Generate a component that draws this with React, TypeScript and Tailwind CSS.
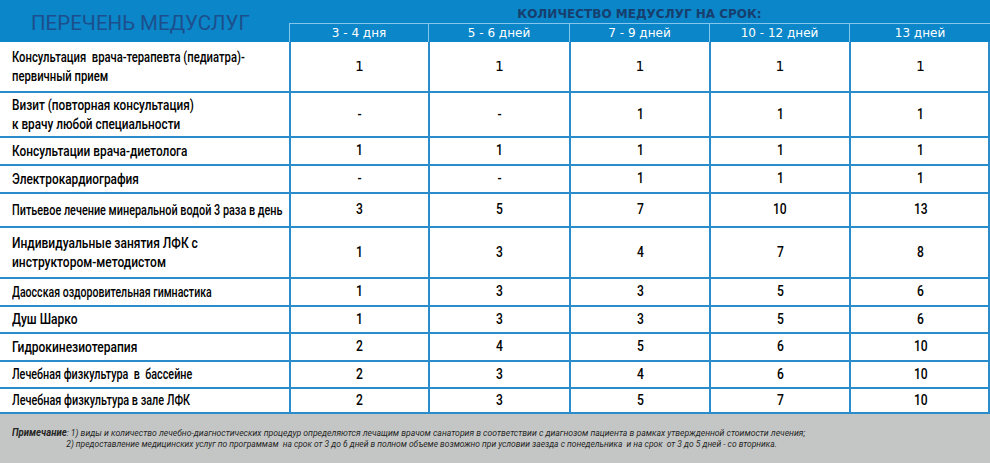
import React from "react";

type Row = {
  label: string[];
  values: string[];
  h: string;
  size: string;
  sx: string;
  wide?: boolean;
};

const rows: Row[] = [
  { label: ["Консультация  врача-терапевта (педиатра)-", "первичный прием"], values: ["1", "1", "1", "1", "1"], h: "h-[51px]", size: "text-[15px]", sx: "scale-x-[0.75]", wide: true },
  { label: ["Визит (повторная консультация)", "к врачу любой специальности"], values: ["-", "-", "1", "1", "1"], h: "h-[45px]", size: "text-[15px]", sx: "scale-x-[0.785]" },
  { label: ["Консультации врача-диетолога"], values: ["1", "1", "1", "1", "1"], h: "h-[28px]", size: "text-[15px]", sx: "scale-x-[0.79]" },
  { label: ["Электрокардиография"], values: ["-", "-", "1", "1", "1"], h: "h-[28px]", size: "text-[15px]", sx: "scale-x-[0.79]" },
  { label: ["Питьевое лечение минеральной водой 3 раза в день"], values: ["3", "5", "7", "10", "13"], h: "h-[34px]", size: "text-[14px]", sx: "scale-x-[0.775]" },
  { label: ["Индивидуальные занятия ЛФК с", "инструктором-методистом"], values: ["1", "3", "4", "7", "8"], h: "h-[51px]", size: "text-[15px]", sx: "scale-x-[0.8]" },
  { label: ["Даосская оздоровительная гимнастика"], values: ["1", "3", "3", "5", "6"], h: "h-[28px]", size: "text-[14px]", sx: "scale-x-[0.755]" },
  { label: ["Душ Шарко"], values: ["1", "3", "3", "5", "6"], h: "h-[27px]", size: "text-[15px]", sx: "scale-x-[0.8]" },
  { label: ["Гидрокинезиотерапия"], values: ["2", "4", "5", "6", "10"], h: "h-[28px]", size: "text-[15px]", sx: "scale-x-[0.8]" },
  { label: ["Лечебная физкультура  в  бассейне"], values: ["2", "3", "4", "6", "10"], h: "h-[27px]", size: "text-[14px]", sx: "scale-x-[0.77]" },
  { label: ["Лечебная физкультура в зале ЛФК"], values: ["2", "3", "5", "7", "10"], h: "h-[25px]", size: "text-[14px]", sx: "scale-x-[0.775]" },
];

const periods = ["3 - 4 дня", "5 - 6 дней", "7 - 9 дней", "10 - 12 дней", "13 дней"];

const cols = "grid grid-cols-[289px_139px_141px_140px_140px_141px]";
const cond = "font-['Roboto',sans-serif] font-medium";

export default function App() {
  return (
    <div className="w-[990px] h-[463px] bg-white flex flex-col overflow-hidden">
      {/* Header */}
      <div className="flex h-[42px] bg-[#0a86c9] shrink-0">
        <div className="w-[289px] flex items-center pl-[31px] pt-[5px]">
          <h1 className="font-['Roboto',sans-serif] text-[20.5px] text-[#1d4f8c]">ПЕРЕЧЕНЬ МЕДУСЛУГ</h1>
        </div>
        <div className="flex-1 flex flex-col">
          <div className="h-[25px] flex items-center justify-center pt-[5px]">
            <span className="font-['DejaVu_Sans',sans-serif] font-bold text-[12px] text-[#173f6e]">
              КОЛИЧЕСТВО МЕДУСЛУГ НА СРОК:
            </span>
          </div>
          <div className="flex-1 grid grid-cols-[139px_141px_140px_140px_1fr] border-t border-[#86c6ec]">
            {periods.map((p) => (
              <div
                key={p}
                className="border-l border-[#86c6ec] flex items-center justify-center font-['DejaVu_Sans',sans-serif] text-[12px] text-white"
              >
                {p}
              </div>
            ))}
          </div>
        </div>
      </div>

      {/* Table body */}
      <div className="border-r-2 border-[#2a8ccb]">
        {rows.map((r, i) => (
          <div key={i} className={`${cols} ${r.h} border-b-2 border-[#2a8ccb]`}>
            <div className={`flex flex-col justify-center pl-[12px] leading-[19px] text-black ${cond} ${r.size}`}>
              {r.label.map((l) => (
                <span key={l} className={`whitespace-pre origin-left ${r.sx}`}>
                  {l}
                </span>
              ))}
            </div>
            {r.values.map((v, j) => (
              <div
                key={j}
                className={`border-l-2 border-[#2a8ccb] flex items-center justify-center text-black ${
                  r.wide ? "font-['DejaVu_Sans',sans-serif] text-[14px]" : `${cond} text-[15.5px]`
                }`}
              >
                <span className={r.wide ? "" : "scale-x-[0.78]"}>{v}</span>
              </div>
            ))}
          </div>
        ))}
      </div>

      {/* Footer note */}
      <div className="flex-1 bg-[#c4c6c5] pt-[13px] pl-[12px] font-['Roboto',sans-serif] italic text-[9.5px] leading-[11px] text-[#262626]">
        <p className="whitespace-pre origin-left scale-x-[0.91]">
          <span className="font-bold text-[10.5px]">Примечание</span>: 1) виды и количество лечебно-диагностических процедур определяются лечащим врачом санатория в соответствии с диагнозом пациента в рамках утвержденной стоимости лечения;
        </p>
        <p className="whitespace-pre pl-[61px] origin-left scale-x-[0.89]">
          2) предоставление медицинских услуг по программам  на срок от 3 до 6 дней в полном объеме возможно при условии заезда с понедельника  и на срок  от 3 до 5 дней - со вторника.
        </p>
      </div>
    </div>
  );
}
